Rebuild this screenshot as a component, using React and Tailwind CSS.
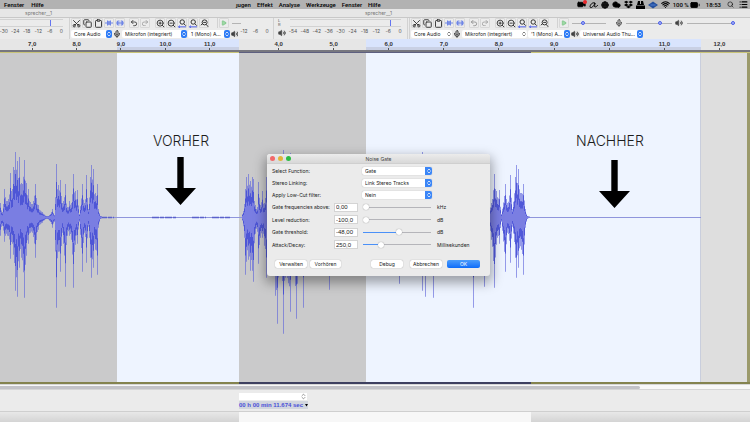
import {
  Scissors, Copy, Clipboard, Undo2, Redo2, ZoomIn, ZoomOut, Mic, Volume2, Play,
  Wifi, Search, List, Globe, Cloud, BatteryFull, Video, ChevronsUpDown,
} from 'lucide-react'
import { FaDropbox } from 'react-icons/fa'

// [x, height above the centre line, depth below it]
const TAKE = [
  [-4, 30, 24], [0, 14, 18], [2, 5, 8], [4, 28, 24], [7, 16, 18], [10, 44, 41], [12, 28, 26], [13, 50, 37],
  [15, 65, 73], [17, 56, 79], [19, 60, 50], [21, 34, 40], [24, 57, 80], [26, 34, 38], [28, 28, 26],
  [32, 13, 15], [35, 33, 40], [38, 12, 12], [42, 5, 5], [46, 1, 1], [49, 2, 3], [52, 8, 10], [54, 2, 4],
  [56, 53, 90], [58, 32, 34], [60, 37, 54], [62, 14, 15], [65, 33, 69], [67, 10, 18], [69, 16, 18],
  [71, 14, 22], [73, 43, 70], [75, 26, 27], [77, 27, 26], [79, 3, 4], [82, 33, 54], [84, 14, 15],
  [86, 42, 45], [88, 8, 9], [90, 40, 40], [91, 52, 60], [93, 48, 50], [95, 24, 32], [97, 33, 57],
  [98, 8, 10], [100, 1, 1], [102, 0, 0],
]

const INTRO = [
  [242, 3, 3], [244, 13, 20], [245, 28, 57], [246, 40, 44], [248, 43, 42], [250, 36, 53], [252, 40, 53],
  [253, 38, 64], [255, 12, 16], [257, 10, 14], [258, 35, 46], [260, 12, 20], [262, 26, 20], [264, 14, 28],
  [266, 40, 60], [270, 38, 55], [275, 48, 78], [277, 52, 106], [279, 30, 40], [283, 67, 116], [285, 28, 60],
  [290, 64, 94], [293, 30, 56], [296, 50, 101], [299, 20, 40], [303, 45, 90], [306, 20, 30], [329, 40, 72],
  [335, 20, 30], [380, 20, 30], [390, 20, 40], [399, 40, 66], [404, 5, 5],
]

// The same take appears again further right, on a wider time scale
const SECOND_TAKE = TAKE.filter(([x]) => x >= 2).map(([x, up, down]) => [Math.round(516 + (x - 91) * 1.233), up, down])

const MID = 165

function columnsOf(points) {
  const out = []
  for (let i = 0; i < points.length - 1; i++) {
    const [x0, u0, d0] = points[i]
    const [x1, u1, d1] = points[i + 1]
    for (let x = x0; x < x1; x++) {
      const t = (x - x0) / (x1 - x0)
      const n = x === x0 ? 1 : 0.62 + 0.2 * Math.abs(Math.sin(x * 12.9))
      out.push([x, (u0 + (u1 - u0) * t) * n, (d0 + (d1 - d0) * t) * n])
    }
  }
  return out
}

const bars = (cols, k) =>
  cols.map(([x, u, d]) => `M${x} ${(MID - u * k).toFixed(1)}h1V${(MID + d * k + 0.8).toFixed(1)}h-1z`).join('')

function Waveform() {
  const cols = [TAKE, INTRO, SECOND_TAKE].flatMap(columnsOf)
  return (
    <svg className="absolute left-0 top-0 h-full w-[750px]" viewBox="0 0 750 332" preserveAspectRatio="xMinYMin slice" aria-hidden="true">
      <path d={`M0 ${MID + 0.5}H242M404 ${MID + 0.5}H701`} stroke="#8f95dc" strokeWidth="1" />
      <path d="M100 165.5h14M152 165.5h24M192 165.5h14M212 165.5h18" stroke="#5a60cc" strokeWidth="1.4" strokeDasharray="7 1 4 1" />
      <path d={bars(cols, 1)} fill="#5c62dc" opacity=".62" />
      <path d={bars(cols, 0.66)} fill="#444cd6" opacity=".85" />
      <path d={bars(cols, 0.36)} fill="#7a7ee2" />
    </svg>
  )
}

function Arrow({ className }) {
  return (
    <svg className={`block h-[48px] w-[31px] ${className}`} viewBox="0 0 31 48" aria-hidden="true">
      <path d="M12.3 0h6.4v31H31L15.5 48 0 31h12.3z" fill="#000" />
    </svg>
  )
}

function MenuBar() {
  return (
    <header className="flex h-[9px] items-center bg-[#b2b2b2] font-['Roboto',sans-serif] text-[6px] font-medium leading-[9px] text-black">
      <nav className="flex w-[236px] gap-[7px] pl-[4px]">
        <a href="#fenster">Fenster</a>
        <a href="#hilfe">Hilfe</a>
      </nav>
      <nav className="flex flex-1 gap-[6px]">
        <a href="#erzeugen">ȷugen</a>
        <a href="#effekt">Effekt</a>
        <a href="#analyse">Analyse</a>
        <a href="#werkzeuge">Werkzeuge</a>
        <a href="#fenster-2">Fenster</a>
        <a href="#hilfe-2">Hilfe</a>
      </nav>
      <div className="flex items-center gap-[3px] pr-[2px]">
        <span className="relative">
          <Video size={9} fill="black" />
          <span className="absolute -right-px top-0 size-[4px] rounded-full bg-[#e8262a]" />
        </span>
        <svg width="9" height="8" viewBox="0 0 9 8" fill="none" stroke="black">
          <path d="M6 2C3 1 1 4 1 6c1 2 4-1 5-4 0 2-1 4 0 4s2-1 3-2" />
        </svg>
        <Globe size={8} fill="#222" />
        <Cloud size={9} fill="black" />
        <FaDropbox size={9} />
        <svg width="9" height="8" viewBox="0 0 9 8">
          <path d="M2 0h2v3h1V0h2l1 4H1zM0 4.6h9V8H0z" />
        </svg>
        <svg width="10" height="8" viewBox="0 0 10 8">
          <path d="M5 .5 10 4 5 7.5 0 4z" fill="#24509e" />
          <path d="M2.5 4h5" stroke="#5b8ae0" strokeWidth=".8" />
        </svg>
        <Wifi size={9} strokeWidth={3} />
        <span>100 %</span>
        <BatteryFull size={10} fill="black" className="-ml-[2px]" />
        <time className="px-[3px]">18:53</time>
        <Search size={7} />
        <List size={9} className="ml-[2px]" strokeWidth={3} />
      </div>
    </header>
  )
}

function ToolButton({ label, children }) {
  return (
    <button type="button" aria-label={label} className="flex h-[10px] w-[10px] items-center justify-center rounded-[1px] border border-[#d8d8d8] bg-[#ececec] text-[#333]">
      {children}
    </button>
  )
}

function MiniSelect({ label, value, blue, className }) {
  return (
    <span className={`relative flex h-[8px] items-center rounded-[2px] bg-white ${className}`}>
      <select aria-label={label} className="h-[8px] w-full appearance-none pl-[3px] text-[5px] leading-[8px] text-[#222]">
        <option>{value}</option>
      </select>
      <span className={`pointer-events-none absolute right-0 top-0 flex h-[8px] w-[6px] items-center justify-center rounded-[2px] ${blue ? 'bg-[#2f7cf6] text-white' : 'text-[#555]'}`}>
        <ChevronsUpDown size={6} strokeWidth={3} />
      </span>
    </span>
  )
}

const TRIM_ICON = (
  <svg width="8" height="6" viewBox="0 0 8 6" fill="#6f86e6">
    <path d="M0 2.6h8v.8H0zM2 .5h1.2v5H2zM3.4 1h1.2v4H3.4zM4.8.5H6v5H4.8z" />
  </svg>
)
const SILENCE_ICON = (
  <svg width="8" height="6" viewBox="0 0 8 6" fill="#6f86e6">
    <path d="M0 2.6h8v.8H0zM.8.8H2v4.4H.8zM2.4.2h.9v5.6h-.9zM4.8.2h.9v5.6h-.9zM6 .8h1.2v4.4H6z" />
  </svg>
)
const FIT_ICON = (
  <svg width="9" height="9" viewBox="0 0 9 9" fill="none" className="shrink-0">
    <circle cx="4.2" cy="3" r="2.2" stroke="#333" />
    <path d="m5.8 4.7 2 2" stroke="#333" />
    <path d="M.5 7.8h7.5M2 6.6.5 7.8 2 9" stroke="#4a5cf0" strokeWidth=".9" />
  </svg>
)
const TOGGLE_ICON = (
  <svg width="9" height="9" viewBox="0 0 9 9" fill="none" stroke="#333" className="shrink-0">
    <circle cx="4.6" cy="3.4" r="2.5" />
    <path d="m6.3 5.4 1.8 2.4M2.6 4.6.8 6.2M3.2 3.4h2.8" />
  </svg>
)

const KNOB = 'h-[6px] appearance-none bg-[linear-gradient(#b4b4b4,#b4b4b4)] bg-[length:100%_1px] bg-center bg-no-repeat [&::-webkit-slider-thumb]:size-[4px] [&::-webkit-slider-thumb]:appearance-none [&::-webkit-slider-thumb]:rounded-full [&::-webkit-slider-thumb]:border [&::-webkit-slider-thumb]:border-[#4a5ee8] [&::-webkit-slider-thumb]:bg-[#a9b4f8]'

function EditTools({ blue, mixer }) {
  return (
    <div className="flex flex-col gap-px border-l border-[#d2d2d2] pl-px">
      <div className="flex h-[10px] items-center">
        <div className="flex gap-px">
          <ToolButton label="Ausschneiden"><Scissors size={9} strokeWidth={2.5} className="shrink-0 -rotate-90" /></ToolButton>
          <ToolButton label="Kopieren"><Copy size={9} strokeWidth={2.5} className="shrink-0" /></ToolButton>
          <ToolButton label="Einfügen"><Clipboard size={9} strokeWidth={2.5} className="shrink-0" /></ToolButton>
          <ToolButton label="Zuschneiden">{TRIM_ICON}</ToolButton>
          <ToolButton label="Stille">{SILENCE_ICON}</ToolButton>
        </div>
        <div className="ml-[4px] flex gap-px">
          <ToolButton label="Rückgängig"><Undo2 size={8} strokeWidth={2.5} className={blue ? '' : 'opacity-50'} /></ToolButton>
          <ToolButton label="Wiederholen"><Redo2 size={8} className="opacity-50" /></ToolButton>
        </div>
        <div className="ml-[5px] flex gap-px">
          <ToolButton label="Vergrößern"><ZoomIn size={9} strokeWidth={2.5} className="shrink-0" /></ToolButton>
          <ToolButton label="Verkleinern"><ZoomOut size={9} strokeWidth={2.5} className="shrink-0" /></ToolButton>
          <ToolButton label="Auswahl einpassen">{FIT_ICON}</ToolButton>
          <ToolButton label="Projekt einpassen">{FIT_ICON}</ToolButton>
          <ToolButton label="Zoom umschalten">{TOGGLE_ICON}</ToolButton>
        </div>
        <div className="ml-[8px] flex items-center border-l border-[#d2d2d2] pl-px">
          <ToolButton label="Abspielen"><Play size={6} color="#5fb96a" fill="#9fd8a6" /></ToolButton>
          <input type="range" aria-label="Geschwindigkeit" defaultValue="30" className={`${KNOB} ml-[3px] w-[34px]`} />
        </div>
        {mixer && (
          <div className="ml-[9px] flex items-center text-[#444]">
            <Mic size={8} strokeWidth={3} />
            <input type="range" aria-label="Aufnahmepegel" defaultValue="76" className={`${KNOB} ml-[3px] w-[46px]`} />
            <Volume2 size={8} className="ml-[3px]" fill="#444" />
            <input type="range" aria-label="Wiedergabepegel" defaultValue="100" className={`${KNOB} ml-[4px] w-[48px]`} />
          </div>
        )}
      </div>
      <div className="flex h-[10px] items-center text-[#333]">
        <MiniSelect label="Audio-Host" value="Core Audio" blue={blue} className="w-[41px]" />
        <Mic size={8} strokeWidth={3} className="mx-px" />
        <MiniSelect label="Aufnahmegerät" value="Mikrofon (integriert)" blue={blue} className="w-[65px]" />
        <MiniSelect label="Kanäle" value={blue ? '1 (Mono) A...' : "'1 (Mono) A..."} blue className="ml-px w-[42px]" />
        <Volume2 size={8} className="mx-px" fill="#444" />
        {mixer && <MiniSelect label="Wiedergabegerät" value="Universal Audio Thu..." blue className="w-[63px]" />}
      </div>
    </div>
  )
}

function Scale({ values, className }) {
  return (
    <div className={`flex justify-between text-[5px] leading-[7px] text-[#555] ${className}`}>
      {values.map((v) => <span key={v} className="w-[12px] text-center">{v}</span>)}
    </div>
  )
}

function Toolbars() {
  return (
    <div className="flex h-[21px] overflow-hidden bg-[#ebebeb]">
      <div className="w-[69px] overflow-hidden">
        <div className="flex h-[10px] flex-col justify-between py-px pr-[6px]">
          <div className="h-px bg-[#d2d2d2]" />
          <div className="ml-[50px] h-[6px] w-px shrink-0 bg-[#6475f0]" />
          <div className="h-px bg-[#d2d2d2]" />
        </div>
        <Scale values={['-30', '-24', '-18', '-12', '-6', '0']} className="-ml-[2px] w-[69px]" />
      </div>
      <div className="w-[169px] overflow-hidden">
        <div className="w-[340px]"><EditTools blue /></div>
      </div>
      <div className="w-[35px] overflow-hidden">
        <div className="flex h-[10px] items-center">
          <div className="h-px w-[3px] bg-[#b4b4b4]" />
        </div>
        <Scale values={['-12', '-6', '0']} className="w-[35px]" />
      </div>
      <div className="flex w-[135px] border-x border-[#d2d2d2]">
        <div className="w-[16px] pl-[4px] text-[4px] leading-[4px] text-[#555]">
          <div className="pt-px">L</div>
          <div>R</div>
          <Volume2 size={8} className="mt-[2px]" fill="#444" color="#444" />
        </div>
        <div className="flex-1">
          <div className="flex h-[10px] flex-col justify-between py-px pr-[6px]">
            <div className="h-px bg-[#d2d2d2]" />
            <div className="ml-[100px] h-[6px] w-px shrink-0 bg-[#6475f0]" />
            <div className="h-px bg-[#d2d2d2]" />
          </div>
          <Scale values={['-54', '-48', '-42', '-36', '-30', '-24', '-18', '-12', '-6', '0']} className="-ml-[3px] w-[119px]" />
        </div>
      </div>
      <div className="flex-1 pl-px"><EditTools mixer /></div>
    </div>
  )
}

function Tick({ label }) {
  return (
    <div className="flex flex-col items-center">
      <span className="h-[9px]">{label}</span>
      <span className="h-[2px] w-px bg-[#555]" />
    </div>
  )
}

function Ruler() {
  return (
    <div className="relative h-[13px] overflow-hidden border-b-2 border-[#77777f] bg-[#e6e6e6]">
      <div className="absolute inset-0 flex" aria-hidden="true">
        <div className="ml-[117px] w-[122px] border-b-[3px] border-[#c9d0e4] bg-[#d9e4fd]" />
        <div className="ml-[127px] w-[335px] border-b-[3px] border-[#c9d0e4] bg-[#d9e4fd]" />
      </div>
      <div className="relative flex font-['Liberation_Sans',sans-serif] text-[6px] font-bold leading-[11px] text-[#333]">
        <div className="ml-[10px] grid w-[222px] shrink-0 grid-cols-5">
          {['7,0', '8,0', '9,0', '10,0', '11,0'].map((t) => <Tick key={t} label={t} />)}
        </div>
        <div className="ml-[19px] grid w-[496px] shrink-0 grid-cols-9">
          {['4,0', '5,0', '6,0', '7,0', '8,0', '9,0', '10,0', '11,0', '12,0'].map((t) => <Tick key={t} label={t} />)}
        </div>
      </div>
    </div>
  )
}

function DialogSelect({ id, label, value }) {
  return (
    <div className="flex h-[12px] items-center">
      <label htmlFor={id} className="w-[90px]">{label}</label>
      <span className="relative h-[8px] w-[70px] overflow-hidden rounded-[2px] bg-white shadow-[0_0_1px_#999]">
        <select id={id} className="block h-[8px] w-full appearance-none pl-[3px] leading-[8px]">
          <option>{value}</option>
        </select>
        <span className="pointer-events-none absolute right-0 top-0 flex h-[8px] w-[7px] items-center justify-center bg-[#3b86f7] text-white">
          <ChevronsUpDown size={6} strokeWidth={3} />
        </span>
      </span>
    </div>
  )
}

function DialogSlider({ id, label, value, percent, unit }) {
  return (
    <div className="flex items-center">
      <label htmlFor={id} className="w-[62px]">{label}</label>
      <input id={id} defaultValue={value} className="h-[9px] w-[24px] border border-[#d4d4d4] bg-white pl-px font-['Liberation_Sans',sans-serif] text-[6px] leading-[7px]" />
      <input
        type="range"
        aria-label={label}
        defaultValue={percent}
        className="ml-[5px] h-[7px] w-[68px] appearance-none bg-[length:100%_1px] bg-center bg-no-repeat [&::-webkit-slider-thumb]:size-[6px] [&::-webkit-slider-thumb]:appearance-none [&::-webkit-slider-thumb]:rounded-full [&::-webkit-slider-thumb]:bg-white [&::-webkit-slider-thumb]:shadow-[0_0_1px_#777]"
        style={{ backgroundImage: `linear-gradient(90deg, #4a90f8 ${percent}%, #b5b5ba ${percent}%)` }}
      />
      <span className="ml-[6px]">{unit}</span>
    </div>
  )
}

const BUTTON = 'h-[8px] rounded-[2px] bg-white text-center leading-[8px] shadow-[0_0_1px_#888]'

function NoiseGateDialog() {
  return (
    <section role="dialog" aria-label="Noise Gate" className="absolute left-[267px] top-[102px] w-[223px] rounded-[3px] bg-[#ebebeb] text-[5px] leading-[8px] text-[#222] shadow-[0_5px_12px_2px_rgba(0,0,0,0.35)]">
      <div className="relative h-[10px] rounded-t-[3px] border-b border-[#cfcfcf] bg-gradient-to-b from-[#ececec] to-[#d8d8d8] text-center leading-[10px] text-[#444]">
        <div className="absolute left-[3px] top-[2px] flex gap-[3px]">
          <button type="button" aria-label="Schließen" className="size-[5px] rounded-full bg-[#f2696a]" />
          <button type="button" aria-label="Minimieren" className="size-[5px] rounded-full bg-[#e2b53a]" />
          <button type="button" aria-label="Zoomen" className="size-[5px] rounded-full bg-[#2cbb45]" />
        </div>
        Noise Gate
      </div>
      <form className="px-[5px] pb-[8px] pt-px" onSubmit={(e) => e.preventDefault()}>
        <DialogSelect id="function" label="Select Function:" value="Gate" />
        <DialogSelect id="linking" label="Stereo Linking:" value="Link Stereo Tracks" />
        <DialogSelect id="lowcut" label="Apply Low-Cut filter:" value="Nein" />
        <div className="grid h-[50px] grid-rows-4">
          <DialogSlider id="freq" label="Gate frequencies above:" value="0,00" percent={0} unit="kHz" />
          <DialogSlider id="level" label="Level reduction:" value="-100,0" percent={0} unit="dB" />
          <DialogSlider id="threshold" label="Gate threshold:" value="-48,00" percent={53} unit="dB" />
          <DialogSlider id="decay" label="Attack/Decay:" value="250,0" percent={24} unit="Millisekunden" />
        </div>
        <div className="mt-[9px] flex pl-[3px] pr-[5px]">
          <button type="button" className={`${BUTTON} w-[32px]`}>Verwalten</button>
          <button type="button" className={`${BUTTON} ml-[3px] w-[31px]`}>Vorhören</button>
          <button type="button" className={`${BUTTON} ml-auto w-[32px]`}>Debug</button>
          <button type="button" className={`${BUTTON} ml-[7px] w-[32px]`}>Abbrechen</button>
          <button type="submit" className="ml-[5px] h-[8px] w-[33px] rounded-[2px] bg-gradient-to-b from-[#4b9dfb] to-[#0a6bf9] text-center leading-[8px] text-white">OK</button>
        </div>
      </form>
    </section>
  )
}

function Track() {
  return (
    <main className="relative flex flex-1 flex-col">
      <div className="flex h-px bg-[#c9c478]">
        <div className="ml-[239px] w-[292px] bg-[#5d5f80]" />
      </div>
      <div className="flex flex-1 border-r-[3px] border-[#9b9a6c]">
        <div className="w-[117px] bg-[#cacacb]" />
        <div className="w-[122px] bg-[#eef4ff]" />
        <div className="w-[127px] bg-[#cacacb]" />
        <div className="w-[335px] border-r border-[#c9cedd] bg-[#eef4ff]" />
        <div className="flex-1 bg-[#dedede]" />
      </div>
      <div className="flex h-[2px] bg-[#84834f]">
        <div className="ml-[239px] w-[292px] bg-[#3e4060]" />
      </div>
      <Waveform />
      <div className="absolute left-[153px] top-[80px] text-[14px] font-light leading-[18px] text-[#1c1c1c]">
        <p className="mb-[7px]">VORHER</p>
        <Arrow className="ml-[12px]" />
      </div>
      <div className="absolute left-[576px] top-[80px] text-[14px] font-light leading-[18px] text-[#1c1c1c]">
        <p className="mb-[10px]">NACHHER</p>
        <Arrow className="ml-[23px]" />
      </div>
      <NoiseGateDialog />
    </main>
  )
}

export default function App() {
  return (
    <div className="flex min-h-screen flex-col overflow-hidden bg-[#ebebeb] font-['Inter',sans-serif]">
      <MenuBar />
      <div className="flex h-[9px] border-b border-[#c8c8c8] bg-[#e6e6e6] text-[5px] leading-[8px] text-[#777]">
        <h1 className="w-[239px] pl-[25px]">sprecher__1</h1>
        <h2 className="w-[279px] text-center">sprecher__1</h2>
      </div>
      <Toolbars />
      <Ruler />
      <Track />
      <div className="h-[6px] border-y border-[#d6d6d6] bg-[#f8f8f8]">
        <div className="mt-px h-[3px] w-[640px] rounded-r-full bg-[#c3c3c8]" />
      </div>
      <footer>
        <div className="flex h-[22px] flex-col gap-px border-b border-[#cfcfcf] pl-[239px] pt-[3px]">
          <div className="relative h-[7px] w-[68px] bg-white">
            <select aria-label="Auswahlmodus" className="block h-[7px] w-full appearance-none">
              <option></option>
            </select>
            <ChevronsUpDown size={7} className="pointer-events-none absolute right-0 top-0 text-[#555]" />
          </div>
          <output className="flex h-[8px] w-[69px] justify-between whitespace-nowrap bg-[#d2d6de] font-['Liberation_Sans',sans-serif] text-[6px] font-bold leading-[8px] text-[#4a50d8]">
            00 h 00 min 11.674 sec
            <svg width="3" height="8" viewBox="0 0 3 8" aria-hidden="true"><path d="M0 3h3L1.5 5.5z" /></svg>
          </output>
        </div>
        <div className="flex h-[10px] bg-gradient-to-b from-[#e8e8e8] to-[#d4d4d4]">
          <div className="ml-[239px] w-[292px] bg-[#f7f7f7]" />
        </div>
      </footer>
    </div>
  )
}
